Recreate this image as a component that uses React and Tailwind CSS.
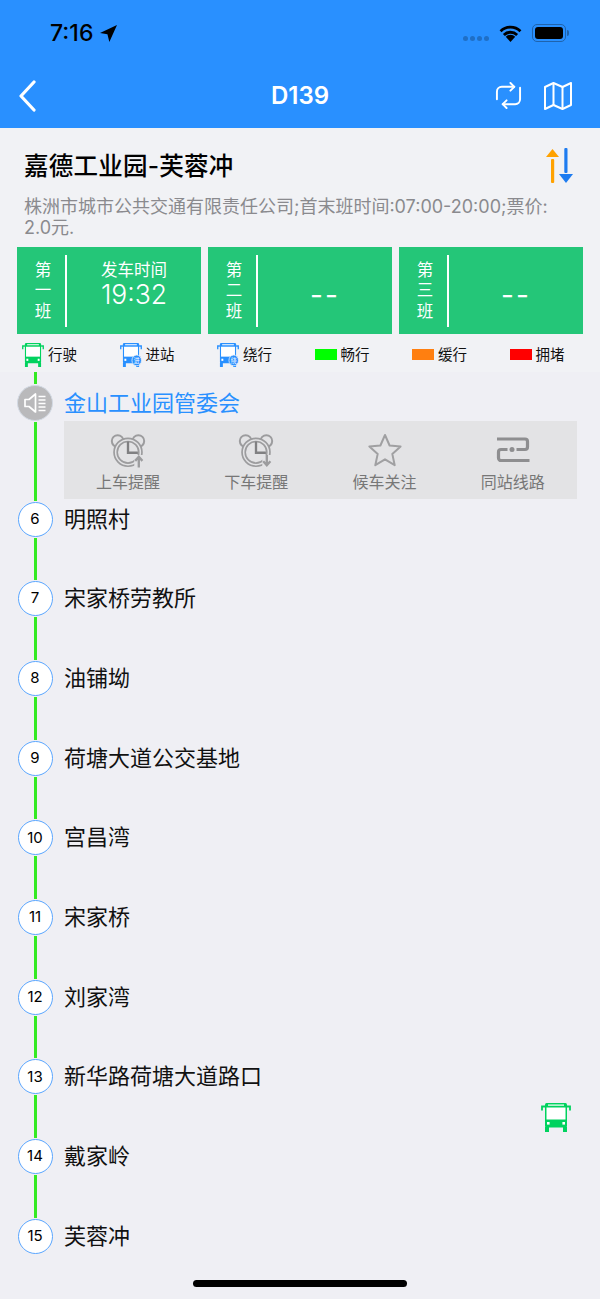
import React from 'react';

const font = 'font-["Inter","Noto_Sans_CJK_SC",sans-serif]';

const BusIcon = ({ color = '#00d25e', badge, className }) => (
  <svg viewBox="0 0 30 29" preserveAspectRatio="none" className={className}>
    <path d="M1 7.500V3.500h3M29 7.500V3.500h-3" fill="none" stroke={color} strokeWidth="1.800" />
    <rect x="4" y="0" width="22" height="24.500" rx="1.500" fill={color} />
    <rect x="7" y="1.500" width="16" height="1.200" fill="#fff" />
    <rect x="5.500" y="4.500" width="19" height="12" fill="#fff" />
    <rect x="6" y="19" width="2.600" height="2.600" fill="#fff" />
    <rect x="21.400" y="19" width="2.600" height="2.600" fill="#fff" />
    <path d="M4 24h4v5H4zM22 24h4v5h-4z" fill={color} />
    {badge && <circle cx="22.800" cy="21" r="6.500" fill={color} stroke="#f1f2f5" strokeWidth="1" />}
    {badge && <text x="22.800" y="24" textAnchor="middle" fontSize="8" fill="#fff">{badge}</text>}
  </svg>
);

const AlarmIcon = ({ up }) => (
  <svg viewBox="0 0 40 38" className="w-[36px] h-[35px]" fill="none" stroke="#9c9c9e">
    <circle cx="8.500" cy="8.500" r="6.500" strokeWidth="2.200" />
    <circle cx="31.500" cy="8.500" r="6.500" strokeWidth="2.200" />
    <circle cx="20" cy="21" r="15.500" strokeWidth="1.900" fill="#e3e3e5" />
    <circle cx="20" cy="21" r="12" strokeWidth="1.800" />
    <path d="M20 9v12.500h11" stroke="#808082" strokeWidth="2.600" />
    <rect x="27" y="24" width="10" height="14" fill="#e3e3e5" stroke="none" />
    {up
      ? <path d="M32 38v-11M28 30.500l4-4.500 4 4.500" stroke="#9c9c9e" strokeWidth="2.600" />
      : <path d="M32 24v11M28 31l4 4.500 4-4.500" stroke="#9c9c9e" strokeWidth="2.600" />}
  </svg>
);

const StarIcon = () => (
  <svg viewBox="0 0 34 34" className="w-[34px] h-[34px]" fill="none" stroke="#a0a0a2" strokeWidth="2" strokeLinejoin="round">
    <path d="M17 2l4.600 10.500 11 1-8.300 7.400 2.400 11.300L17 26.300 7.300 32.200l2.400-11.300L1.400 13.500l11-1z" />
  </svg>
);

const SameStopIcon = () => (
  <svg viewBox="0 0 34 26" className="w-[34px] h-[26px]" fill="none" stroke="#8e8e90" strokeWidth="3.200" strokeLinejoin="round">
    <path d="M1 2h28a2.500 2.500 0 0 1 2.500 2.500v5.500a2.500 2.500 0 0 1-2.500 2.500h-8.500" />
    <path d="M11.500 12.500H5A2.500 2.500 0 0 0 2.500 15v6A2.500 2.500 0 0 0 5 23.500h28.500" />
    <circle cx="16" cy="12.500" r="2.500" fill="#8e8e90" stroke="none" />
  </svg>
);

const SpeakerIcon = () => (
  <svg viewBox="0 0 24 24" className="w-[24px] h-[24px]" fill="none" stroke="#fff">
    <path d="M2 8.500h4L12.500 3v18L6 15.500H2z" strokeWidth="1.700" strokeLinejoin="round" />
    <path d="M15.500 5.500h7M15.500 9h7M15.500 12.500h7M15.500 16h7M15.500 19.500h7" strokeWidth="1.500" />
  </svg>
);

const LineIcon = () => <div className="w-[3px] flex-1 my-[1px] bg-[#33ea22]" />;

const Legend = ({ children, label }) => (
  <div className="w-[97.500px] shrink-0 flex items-center gap-[4px] text-[14.500px] text-[#111]">
    {children}
    <span>{label}</span>
  </div>
);

const Shift = ({ no, children, className }) => (
  <div className="w-[184px] h-[87px] bg-[#24c678] flex items-center text-white">
    <div className="w-[48px] pl-[4px] flex flex-col items-center text-[16.500px] leading-[20.500px]">
      <span>第</span>
      <span>{no}</span>
      <span>班</span>
    </div>
    <div className="w-[2px] h-[72px] bg-white" />
    <div className={`flex-1 flex flex-col items-center ${className}`}>{children}</div>
  </div>
);

const Action = ({ icon, label }) => (
  <div className="flex flex-col items-center">
    <div className="h-[38px] flex items-center justify-center mt-[10px]">{icon}</div>
    <span className="mt-[1px] text-[16px] leading-[24px] text-[#777]">{label}</span>
  </div>
);

const stops = [
  [6, '明照村'],
  [7, '宋家桥劳教所'],
  [8, '油铺坳'],
  [9, '荷塘大道公交基地'],
  [10, '宫昌湾'],
  [11, '宋家桥'],
  [12, '刘家湾'],
  [13, '新华路荷塘大道路口'],
  [14, '戴家岭'],
  [15, '芙蓉冲'],
];

export default function App() {
  return (
    <div className={`${font} relative w-[600px] h-[1299px] overflow-hidden bg-[#efeff4] text-black`}>
      {/* status + nav bar */}
      <div className="h-[128px] bg-[#2990ff] flex flex-col">
        <div className="h-[64px] pl-[50px] pr-[31px] pt-[17px] flex items-start justify-between">
          <div className="flex items-center gap-[7px] h-[32px]">
            <span className="text-[23px] font-medium leading-none">7:16</span>
            <svg viewBox="0 0 16 16" className="w-[17px] h-[17px]"><path d="M16 0L0 7.500l7 1.300L8.800 16z" /></svg>
          </div>
          <div className="flex items-center h-[32px]">
            <div className="flex gap-[2px] mr-[10px] mt-[11px]">
              <i className="block w-[5px] h-[5px] rounded-full bg-[#1f6fc6]" />
              <i className="block w-[5px] h-[5px] rounded-full bg-[#1f6fc6]" />
              <i className="block w-[5px] h-[5px] rounded-full bg-[#1f6fc6]" />
              <i className="block w-[5px] h-[5px] rounded-full bg-[#1f6fc6]" />
            </div>
            <svg viewBox="0 0 24 18" className="w-[23px] h-[17px] mr-[10px]" fill="none" stroke="#000" strokeWidth="3">
              <path d="M1.500 6.500a15 15 0 0 1 21 0M5 10.500a10 10 0 0 1 14 0" />
              <path d="M12 18l-5-5.500a7 7 0 0 1 10 0z" fill="#000" stroke="none" />
            </svg>
            <div className="w-[34px] h-[18px] rounded-[5px] border border-[#1f63ad] p-[2px]">
              <div className="w-full h-full rounded-[3px] bg-black" />
            </div>
            <div className="w-[2px] h-[6px] bg-[#1f63ad] rounded-r-sm ml-[1px]" />
          </div>
        </div>
        <div className="flex-1 relative flex items-center justify-center">
          <span className="text-[24px] font-semibold text-white">D139</span>
          <svg viewBox="0 0 20 32" className="absolute left-[18px] top-[16px] w-[20px] h-[32px]" fill="none" stroke="#fff" strokeWidth="3.200" strokeLinecap="round" strokeLinejoin="round">
            <path d="M16 2L3 16l13 14" />
          </svg>
          <svg viewBox="0 0 28 28" className="absolute left-[495px] top-[18px] w-[27px] h-[27px]" fill="none" stroke="#fff" strokeWidth="2" strokeLinecap="round" strokeLinejoin="round">
            <path d="M20 5H7a5 5 0 0 0-5 5v8" />
            <path d="M16 1l4 4-4 4" />
            <path d="M8 23h13a5 5 0 0 0 5-5V6" />
            <path d="M12 27l-4-4 4-4" />
          </svg>
          <svg viewBox="0 0 28 28" className="absolute left-[544px] top-[18px] w-[28px] h-[28px]" fill="none" stroke="#fff" strokeWidth="2" strokeLinejoin="round">
            <path d="M1 5l8.500-4 9 4L27 1v22l-8.500 4-9-4L1 27z" />
            <path d="M9.500 1v22M18.500 5v22" />
          </svg>
        </div>
      </div>

      {/* route info */}
      <div className="h-[244px] bg-[#f1f2f5] flex flex-col">
        <div className="relative pl-[24px] pt-[22px] pr-[30px]">
          <h1 className="text-[24.500px] leading-[32px] font-medium tracking-[0.250px]">嘉德工业园-芙蓉冲</h1>
          <svg viewBox="0 0 28 36" className="absolute left-[545px] top-[20px] w-[28px] h-[36px]">
            <path d="M1 9L7.500 1 14 9z" fill="#ffa200" />
            <rect x="6" y="11" width="3.200" height="24" rx="1" fill="#ffa200" />
            <rect x="19.300" y="0" width="3.200" height="25" rx="1" fill="#1e7cf0" />
            <path d="M14 26h14l-7 9z" fill="#1e7cf0" />
          </svg>
          <p className="mt-[14px] text-[18px] leading-[21px] text-[#8a8a8e] whitespace-nowrap">
            株洲市城市公共交通有限责任公司;首末班时间:07:00-20:00;票价:
            <br />
            2.0元.
          </p>
        </div>
        <div className="mt-[9px] pl-[17px] flex gap-[7px]">
          <Shift no="一" className="pb-[15px]">
            <span className="text-[16.500px] leading-[22px]">发车时间</span>
            <span className="text-[26.500px] leading-[26px] font-light">19:32</span>
          </Shift>
          <Shift no="二" className="pt-[8px]"><span className="text-[28px] tracking-[2px]">--</span></Shift>
          <Shift no="三" className="pt-[8px]"><span className="text-[28px] tracking-[2px]">--</span></Shift>
        </div>
        <div className="mt-[8px] pl-[22px] flex items-center h-[25px]">
          <Legend label="行驶"><BusIcon className="w-[22px] h-[24px]" /></Legend>
          <Legend label="进站"><BusIcon color="#2990ff" badge="进" className="w-[22px] h-[24px]" /></Legend>
          <Legend label="绕行"><BusIcon color="#2990ff" badge="绕" className="w-[22px] h-[24px]" /></Legend>
          <Legend label="畅行"><div className="w-[22px] h-[11px] bg-[#0f0]" /></Legend>
          <Legend label="缓行"><div className="w-[22px] h-[11px] bg-[#ff7f10]" /></Legend>
          <Legend label="拥堵"><div className="w-[22px] h-[11px] bg-[#f00]" /></Legend>
        </div>
      </div>

      {/* stop list */}
      <div className="flex flex-col">
        <div className="flex h-[129.500px]">
          <div className="w-[70px] shrink-0 flex flex-col items-center">
            <div className="w-[3px] h-[12px] bg-[#33ea22]" />
            <div className="mt-[1px] w-[36px] h-[36px] rounded-full bg-[#b9b9bb] border border-[#d3dae4] flex items-center justify-center shrink-0"><SpeakerIcon /></div>
            <LineIcon />
          </div>
          <div className="flex-1 pr-[23px] pt-[13px] -ml-[6px]">
            <div className="h-[36px] flex items-center text-[22px] text-[#2990ff]">金山工业园管委会</div>
            <div className="grid grid-cols-4 h-[78px] bg-[#e3e3e5]">
              <Action icon={<AlarmIcon up />} label="上车提醒" />
              <Action icon={<AlarmIcon />} label="下车提醒" />
              <Action icon={<StarIcon />} label="候车关注" />
              <Action icon={<SameStopIcon />} label="同站线路" />
            </div>
          </div>
        </div>
        {stops.map(([n, name], i) => (
          <div key={n} className="flex h-[79.700px]">
            <div className="w-[70px] shrink-0 flex flex-col items-center">
              <div className="w-[35px] h-[35px] shrink-0 rounded-full bg-white border border-[#5aa6ff] flex items-center justify-center text-[15px]">{n}</div>
              {i < stops.length - 1 && <LineIcon />}
            </div>
            <div className="-ml-[6px] h-[35px] flex items-center text-[22px] text-[#111]">{name}</div>
          </div>
        ))}
      </div>

      {/* bus on the line */}
      <BusIcon className="absolute left-[541px] top-[1103px] w-[30px] h-[29px]" />

      <div className="absolute left-[193px] top-[1280px] w-[214px] h-[7px] rounded-full bg-black" />
    </div>
  );
}
